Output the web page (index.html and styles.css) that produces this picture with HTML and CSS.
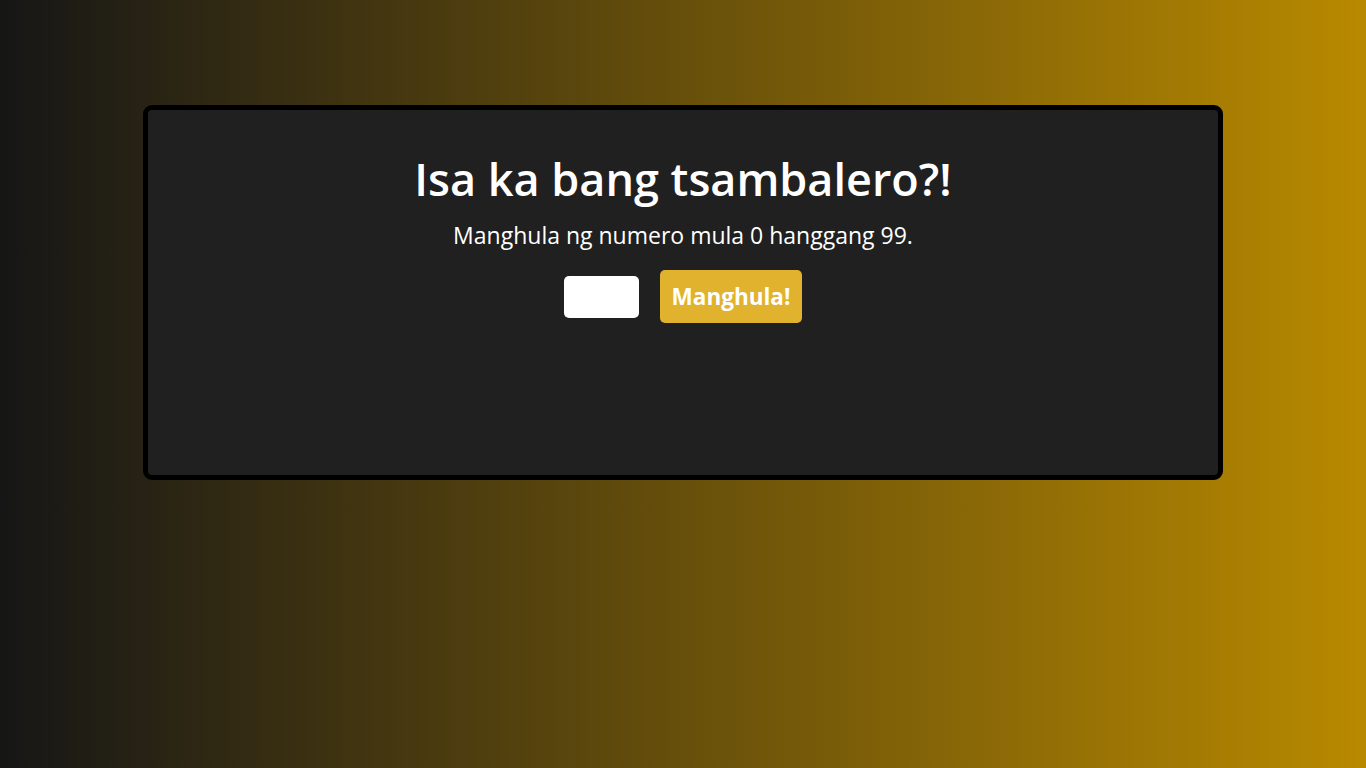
FILE: index.html
```html
<!DOCTYPE html>
<html lang="tl">
<head>
<meta charset="utf-8">
<title>Isa ka bang tsambalero?!</title>
<link rel="stylesheet" href="styles.css">
</head>
<body>
<main class="card">
  <h1 class="title">Isa ka bang tsambalero?!</h1>
  <p class="subtitle">Manghula ng numero mula 0 hanggang 99.</p>
  <div class="controls">
    <input class="guess" type="text" aria-label="Hula">
    <button class="btn" type="button">Manghula!</button>
  </div>
</main>
</body>
</html>
```

FILE: styles.css
```css
html, body {
  margin: 0;
  height: 100%;
}
body {
  background: linear-gradient(to right, #161616 0%, #b88900 100%);
  font-family: "Open Sans", "Noto Sans", sans-serif;
  color: #fff;
  padding-top: 105px;
  box-sizing: border-box;
}
.card {
  width: 1080px;
  height: 375px;
  margin: 0 auto;
  box-sizing: border-box;
  background: #202020;
  border: 5px solid #000;
  border-radius: 9px;
  display: flex;
  flex-direction: column;
  align-items: center;
  padding-top: 39px;
}
.title {
  margin: 0;
  font-size: 45px;
  font-weight: 600;
  line-height: 60px;
}
.subtitle {
  margin: 12px 0 0;
  font-size: 23px;
  line-height: 28px;
}
.controls {
  display: flex;
  align-items: center;
  gap: 21px;
  margin-top: 21px;
}
.guess {
  width: 75px;
  height: 42px;
  box-sizing: border-box;
  border: none;
  border-radius: 5px;
  background: #fff;
  padding: 0;
}
.btn {
  width: 142px;
  height: 53px;
  border: none;
  border-radius: 5px;
  background: #e0b22e;
  color: #fff;
  font-family: inherit;
  font-weight: 700;
  font-size: 22.5px;
  padding: 0;
}
```
